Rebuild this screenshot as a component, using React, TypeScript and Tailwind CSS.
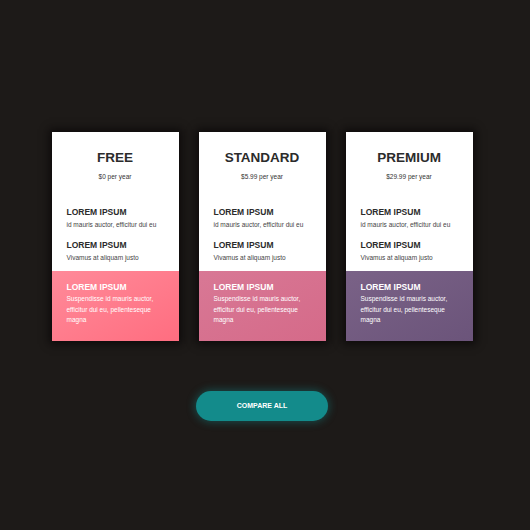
const plans = [
  { name: 'FREE', price: '$0 per year', bottom: 'bg-gradient-to-br from-[#ff8a99] to-[#ff6d80]' },
  { name: 'STANDARD', price: '$5.99 per year', bottom: 'bg-gradient-to-br from-[#d87895] to-[#d56a89]' },
  { name: 'PREMIUM', price: '$29.99 per year', bottom: 'bg-gradient-to-br from-[#7a6287] to-[#6b547a]' },
]

const PlanCard = ({ name, price, bottom }: { name: string; price: string; bottom: string }) => (
  <div className="w-[127px] h-[209px] flex flex-col bg-white shadow-[0_0_8px_3px_rgba(10,8,7,0.8)]">
    <div className="flex-1 px-[15px]">
      <h2 className="mt-[18px] text-center text-[13.5px] leading-[16px] font-bold text-[#2b2b2b]">{name}</h2>
      <p className="mt-[6px] text-center text-[6.5px] leading-[9px] text-[#333]">{price}</p>
      <h3 className="mt-[26px] text-[8.5px] leading-[10px] font-bold text-[#2b2b2b]">LOREM IPSUM</h3>
      <p className="mt-[3px] text-[6.5px] leading-[9px] text-[#444] whitespace-nowrap">id mauris auctor, efficitur dui eu</p>
      <h3 className="mt-[11px] text-[8.5px] leading-[10px] font-bold text-[#2b2b2b]">LOREM IPSUM</h3>
      <p className="mt-[3px] text-[6.5px] leading-[9px] text-[#444]">Vivamus at aliquam justo</p>
    </div>
    <div className={`h-[70px] px-[15px] pt-[11px] text-white ${bottom}`}>
      <h3 className="text-[8.5px] leading-[10px] font-bold">LOREM IPSUM</h3>
      <p className="mt-[2px] text-[6.5px] leading-[10.5px] pr-[4px]">Suspendisse id mauris auctor, efficitur dui eu, pellenteseque magna</p>
    </div>
  </div>
)

export default function App() {
  return (
    <div className="w-[530px] h-[530px] bg-[#1d1a18] flex flex-col items-center font-['Liberation_Sans',Arial,sans-serif]">
      <div className="mt-[132px] mr-[6px] flex gap-[20px]">
        {plans.map((p) => (
          <PlanCard key={p.name} {...p} />
        ))}
      </div>
      <button className="mt-[50px] mr-[6px] w-[132px] h-[30px] rounded-full bg-[#138b8b] text-white text-[7px] font-bold shadow-[0_0_8px_1px_rgba(19,139,139,0.45)]">
        COMPARE ALL
      </button>
    </div>
  )
}
